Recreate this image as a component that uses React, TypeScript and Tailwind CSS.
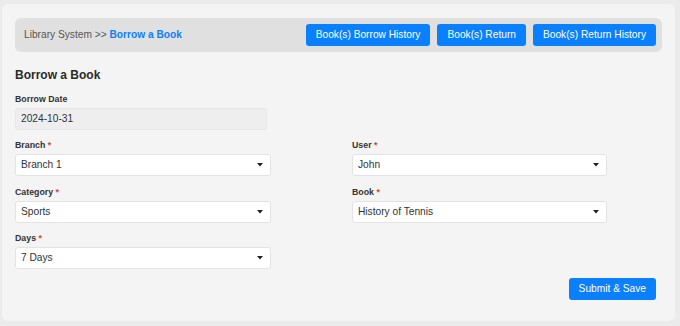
import React from 'react';

const font = { fontFamily: '"Liberation Sans", Arial, sans-serif' };

interface SelectFieldProps {
  label: string;
  value: string;
  width: string;
}

const Caret = () => (
  <svg width="6" height="4" viewBox="0 0 6 4" className="shrink-0">
    <path d="M0 0 L6 0 L3 3.5 Z" fill="#222" />
  </svg>
);

const SelectField: React.FC<SelectFieldProps> = ({ label, value, width }) => (
  <div>
    <div className="h-3 text-[8.8px] font-bold leading-3 text-[#333]">
      {label} <span className="text-[#e53935]">*</span>
    </div>
    <div
      className={`mt-[3px] flex h-[22px] items-center justify-between rounded-[3px] border border-[#e3e3e3] bg-white pl-[5px] pr-[7px] text-[10.2px] text-[#333] ${width}`}
    >
      <span>{value}</span>
      <Caret />
    </div>
  </div>
);

export default function App() {
  const navButtons = ['Book(s) Borrow History', 'Book(s) Return', 'Book(s) Return History'];

  return (
    <div className="h-[326px] w-[680px] bg-[#ebebeb] pl-[2px] pt-[4px]" style={font}>
      <div className="h-[317px] w-[673px] rounded-[6px] bg-[#f4f4f4] px-[13px] pt-[14px]">
        {/* breadcrumb bar */}
        <div className="flex h-[34px] items-center justify-between rounded-[6px] bg-[#e0e0e0] pl-[9px] pr-[6px]">
          <div className="text-[10.2px] text-[#555]">
            Library System &gt;&gt; <span className="font-bold text-[#0a80ff]">Borrow a Book</span>
          </div>
          <div className="flex gap-[7px]">
            {navButtons.map((label) => (
              <button
                key={label}
                className="h-[22px] rounded-[3px] bg-[#0a80ff] px-[10px] text-[10.2px] text-white"
              >
                {label}
              </button>
            ))}
          </div>
        </div>

        <h2 className="mt-[15px] h-4 text-[12px] font-bold leading-4 text-[#2a2a2a]">Borrow a Book</h2>

        <div className="mt-[10px]">
          <div className="h-3 text-[8.8px] font-bold leading-3 text-[#333]">Borrow Date</div>
          <div className="mt-[3px] flex h-[22px] w-[252px] items-center rounded-[3px] border border-[#e6e6e6] bg-[#eeeeee] pl-[5px] text-[10.2px] text-[#333]">
            2024-10-31
          </div>
        </div>

        <div className="mt-[9px] grid grid-cols-[337px_1fr] gap-y-[9.5px]">
          <SelectField label="Branch" value="Branch 1" width="w-[256px]" />
          <SelectField label="User" value="John" width="w-[255px]" />
          <SelectField label="Category" value="Sports" width="w-[256px]" />
          <SelectField label="Book" value="History of Tennis" width="w-[255px]" />
          <SelectField label="Days" value="7 Days" width="w-[256px]" />
        </div>

        <div className="mt-[8.5px] flex justify-end pr-[6px]">
          <button className="h-[22px] rounded-[3px] bg-[#0a80ff] px-[10px] text-[10.2px] text-white">
            Submit &amp; Save
          </button>
        </div>
      </div>
    </div>
  );
}
